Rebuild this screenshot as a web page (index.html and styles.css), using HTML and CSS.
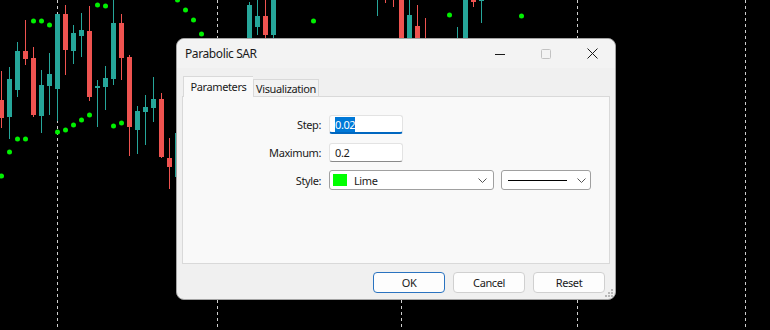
FILE: index.html
```html
<!DOCTYPE html>
<html lang="en">
<head>
  <meta charset="UTF-8" />
  <title>Parabolic SAR</title>
  <link rel="stylesheet" href="styles.css">
</head>
<body>
  <div class="screen">

    <!-- chart canvas -->
    <svg class="chart" width="770" height="330" viewBox="0 0 770 330">
      <g class="grid">
        <line x1="57.5" y1="0" x2="57.5" y2="330" />
        <line x1="217.5" y1="0" x2="217.5" y2="330" />
        <line x1="401.5" y1="0" x2="401.5" y2="330" />
        <line x1="577.5" y1="0" x2="577.5" y2="330" />
        <line x1="745.5" y1="0" x2="745.5" y2="330" />
      </g>

      <g class="bear"><rect x="1" y="71" width="1" height="57"/><rect x="-1" y="100" width="5" height="18"/></g>
      <g class="bull"><rect x="9" y="67" width="1" height="72"/><rect x="7" y="79" width="5" height="38"/></g>
      <g class="bull"><rect x="17" y="42" width="1" height="55"/><rect x="15" y="51" width="5" height="39"/></g>
      <g class="bear"><rect x="25" y="20" width="1" height="45"/><rect x="23" y="51" width="5" height="8"/></g>
      <g class="bear"><rect x="33" y="47" width="1" height="70"/><rect x="31" y="58" width="5" height="57"/></g>
      <g class="bull"><rect x="41" y="70" width="1" height="63"/><rect x="39" y="85" width="5" height="31"/></g>
      <g class="bull"><rect x="49" y="53" width="1" height="62"/><rect x="47" y="74" width="5" height="12"/></g>
      <g class="bull"><rect x="57" y="14" width="1" height="107"/><rect x="55" y="14" width="5" height="75"/></g>
      <g class="bear"><rect x="65" y="5" width="1" height="70"/><rect x="63" y="14" width="5" height="36"/></g>
      <g class="bull"><rect x="73" y="25" width="1" height="39"/><rect x="71" y="33" width="5" height="18"/></g>
      <g class="bull"><rect x="81" y="13" width="1" height="44"/><rect x="79" y="30" width="5" height="6"/></g>
      <g class="bear"><rect x="89" y="6" width="1" height="95"/><rect x="87" y="31" width="5" height="66"/></g>
      <g class="bull"><rect x="97" y="80" width="1" height="47"/><rect x="95" y="86" width="5" height="2"/></g>
      <g class="bull"><rect x="105" y="66" width="1" height="44"/><rect x="103" y="78" width="5" height="9"/></g>
      <g class="bull"><rect x="113" y="0" width="1" height="85"/><rect x="111" y="23" width="5" height="56"/></g>
      <g class="bear"><rect x="121" y="14" width="1" height="66"/><rect x="119" y="23" width="5" height="35"/></g>
      <g class="bear"><rect x="129" y="55" width="1" height="101"/><rect x="127" y="57" width="5" height="70"/></g>
      <g class="bull"><rect x="137" y="106" width="1" height="48"/><rect x="135" y="111" width="5" height="19"/></g>
      <g class="bull"><rect x="145" y="95" width="1" height="50"/><rect x="143" y="107" width="5" height="5"/></g>
      <g class="bull"><rect x="153" y="77" width="1" height="45"/><rect x="151" y="99" width="5" height="9"/></g>
      <g class="bear"><rect x="161" y="93" width="1" height="65"/><rect x="159" y="99" width="5" height="58"/></g>
      <g class="bear"><rect x="169" y="138" width="1" height="51"/><rect x="167" y="158" width="5" height="9"/></g>
      <g class="bull"><rect x="177" y="128" width="1" height="55"/><rect x="175" y="133" width="5" height="44"/></g>
      <g class="bull"><rect x="249" y="2" width="1" height="60"/><rect x="247" y="5" width="5" height="55"/></g>
      <g class="bull"><rect x="257" y="0" width="1" height="35"/><rect x="255" y="16" width="5" height="11"/></g>
      <g class="bear"><rect x="265" y="0" width="1" height="40"/><rect x="263" y="16" width="5" height="19"/></g>
      <g class="bull"><rect x="273" y="0" width="1" height="60"/><rect x="271" y="0" width="5" height="35"/></g>
      <g class="bull"><rect x="377" y="0" width="1" height="16"/></g>
      <g class="bear"><rect x="385" y="0" width="1" height="3"/></g>
      <g class="bear"><rect x="393" y="0" width="1" height="7"/></g>
      <g class="bear"><rect x="399" y="0" width="5" height="60"/></g>
      <g class="bull"><rect x="409" y="0" width="1" height="60"/><rect x="407" y="15" width="5" height="45"/></g>
      <g class="bear"><rect x="417" y="5" width="1" height="55"/><rect x="415" y="26" width="5" height="34"/></g>
      <g class="bear"><rect x="425" y="18" width="1" height="42"/></g>
      <g class="bull"><rect x="457" y="27" width="1" height="33"/></g>
      <g class="bull"><rect x="463" y="0" width="5" height="60"/></g>
      <g class="bear"><rect x="473" y="0" width="1" height="7"/><rect x="471" y="0" width="5" height="2"/></g>
      <g class="bull"><rect x="481" y="0" width="1" height="23"/><rect x="479" y="0" width="5" height="1"/></g>

      <!-- SAR points -->
      <g class="sar">
        <circle cx="1.5" cy="176" r="2.5"/>
        <circle cx="9.5" cy="152" r="2.5"/>
        <circle cx="17.5" cy="139" r="2.5"/>
        <circle cx="25.5" cy="139" r="2.5"/>
        <circle cx="33.5" cy="21" r="2.5"/>
        <circle cx="41.5" cy="21" r="2.5"/>
        <circle cx="49.5" cy="25" r="2.5"/>
        <circle cx="57.5" cy="132" r="2.5"/>
        <circle cx="65.5" cy="130" r="2.5"/>
        <circle cx="73.5" cy="125" r="2.5"/>
        <circle cx="81.5" cy="120" r="2.5"/>
        <circle cx="89.5" cy="115" r="2.5"/>
        <circle cx="97.5" cy="5" r="2.5"/>
        <circle cx="105.5" cy="6" r="2.5"/>
        <circle cx="113.5" cy="126" r="2.5"/>
        <circle cx="121.5" cy="123" r="2.5"/>
        <circle cx="177.5" cy="0" r="2.5"/>
        <circle cx="185.5" cy="10" r="2.5"/>
        <circle cx="193.5" cy="20" r="2.5"/>
        <circle cx="201.5" cy="34" r="2.5"/>
        <circle cx="313.5" cy="21" r="2.5"/>
        <circle cx="449.5" cy="15" r="2.5"/>
        <circle cx="521.5" cy="16" r="2.5"/>
      </g>
    </svg>

    <!-- indicator properties dialog -->
    <div class="dialog">
      <div class="titlebar">
        <span class="title">Parabolic SAR</span>
        <div class="caption-buttons">
          <span class="cap-btn">
            <svg width="10" height="10" viewBox="0 0 10 10"><path d="M0 5.5h10" stroke="#1a1a1a" /></svg>
          </span>
          <span class="cap-btn">
            <svg width="10" height="10" viewBox="0 0 10 10"><rect x="0.5" y="0.5" width="9" height="9" rx="1" fill="none" stroke="#c2c2c2" /></svg>
          </span>
          <span class="cap-btn">
            <svg width="11" height="11" viewBox="0 0 11 11"><path d="M0.5 0.5l10 10M10.5 0.5l-10 10" stroke="#1a1a1a" /></svg>
          </span>
        </div>
      </div>

      <div class="dialog-body">
        <div class="tabs">
          <div class="tab active">Parameters</div>
          <div class="tab">Visualization</div>
        </div>

        <div class="tab-panel">
          <div class="form">
            <label>Step:</label>
            <div class="textbox focused"><span class="selected">0.02</span></div>

            <label>Maximum:</label>
            <div class="textbox">0.2</div>

            <label>Style:</label>
            <div class="combos">
              <div class="combo color-combo">
                <span class="swatch"></span>
                <span class="combo-text">Lime</span>
                <svg class="chevron" width="9" height="5" viewBox="0 0 9 5"><path d="M0.5 0.5l4 4 4-4" fill="none" stroke="#555" /></svg>
              </div>
              <div class="combo line-combo">
                <span class="line-sample"></span>
                <svg class="chevron" width="9" height="5" viewBox="0 0 9 5"><path d="M0.5 0.5l4 4 4-4" fill="none" stroke="#555" /></svg>
              </div>
            </div>
          </div>
        </div>

        <div class="buttons">
          <button class="btn default">OK</button>
          <button class="btn">Cancel</button>
          <button class="btn">Reset</button>
        </div>
      </div>

      <svg class="grip" width="8" height="8" viewBox="0 0 8 8">
        <rect x="6" y="0" width="2" height="2"/>
        <rect x="3" y="3" width="2" height="2"/><rect x="6" y="3" width="2" height="2"/>
        <rect x="0" y="6" width="2" height="2"/><rect x="3" y="6" width="2" height="2"/><rect x="6" y="6" width="2" height="2"/>
      </svg>
    </div>

  </div>
</body>
</html>
```

FILE: styles.css
```css
* { box-sizing: border-box; }

body {
  margin: 0;
  background: #000;
  overflow: hidden;
}

.screen {
  position: relative;
  width: 770px;
  height: 330px;
  background: #000;
}

/* CHART */
.chart {
  display: block;
}

.grid line {
  stroke: #cfcfcf;
  stroke-width: 1;
  stroke-dasharray: 3 3;
}

.bull { fill: #26a69a; }
.bear { fill: #ef5350; }
.sar  { fill: #00f000; }

/* DIALOG */
.dialog {
  position: absolute;
  left: 176px;
  top: 38px;
  width: 440px;
  height: 262px;
  display: flex;
  flex-direction: column;
  background: #f0f0f0;
  border: 1px solid #a3a3a3;
  border-radius: 8px;
  font-family: "Noto Sans", sans-serif;
  font-size: 11px;
  letter-spacing: -0.4px;
  color: #1a1a1a;
}

.titlebar {
  height: 29px;
  display: flex;
  align-items: center;
  justify-content: space-between;
  padding-left: 8px;
  background: #f3f3f3;
  border-radius: 8px 8px 0 0;
}

.title {
  font-size: 12px;
}

.caption-buttons {
  display: flex;
  height: 100%;
}

.cap-btn {
  width: 46px;
  display: flex;
  align-items: center;
  justify-content: center;
}

.dialog-body {
  flex: 1;
  display: flex;
  flex-direction: column;
  padding: 8px 5px 6px 5px;
}

/* TABS */
.tabs {
  display: flex;
  align-items: flex-end;
  height: 20px;
  padding-left: 1px;
}

.tab {
  height: 17px;
  width: 66px;
  display: flex;
  align-items: center;
  justify-content: center;
  background: #f2f2f2;
  border: 1px solid #d9d9d9;
  border-bottom: none;
}

.tab.active {
  position: relative;
  z-index: 1;
  width: 70px;
  height: 21px;
  margin-bottom: -1px;
  padding-bottom: 2px;
  background: #f9f9f9;
  border-right: none;
}

.tab-panel {
  height: 168px;
  background: #f9f9f9;
  border: 1px solid #d9d9d9;
}

/* FORM */
.form {
  display: grid;
  grid-template-columns: 138px auto;
  grid-auto-rows: 28px;
  column-gap: 8px;
  align-items: center;
  padding-top: 13px;
}

.form label {
  text-align: right;
}

.textbox {
  width: 74px;
  height: 19px;
  display: flex;
  align-items: center;
  padding-left: 5px;
  background: #fff;
  border: 1px solid #e3e3e3;
  border-bottom-color: #8a8a8a;
  border-radius: 3px;
}

.textbox.focused {
  border-bottom: 2px solid #0067c0;
  padding-top: 1px;
}

.selected {
  background: #0078d7;
  color: #fff;
}

.combos {
  display: flex;
  gap: 7px;
}

.combo {
  height: 20px;
  display: flex;
  align-items: center;
  background: #fff;
  border: 1px solid #a0a0a0;
  border-radius: 3px;
}

.color-combo {
  width: 165px;
  padding: 0 6px 0 3px;
}

.swatch {
  width: 14px;
  height: 12px;
  background: #00ff00;
}

.combo-text {
  flex: 1;
  margin-left: 7px;
}

.line-combo {
  width: 90px;
  padding: 0 4px 0 6px;
}

.line-sample {
  width: 59px;
  height: 1px;
  background: #000;
  margin-right: auto;
}

.chevron {
  display: block;
}

/* BUTTONS */
.buttons {
  display: flex;
  justify-content: flex-end;
  gap: 8px;
  margin-top: 8px;
  padding-right: 5px;
}

.btn {
  width: 72px;
  height: 21px;
  padding: 0;
  font-family: inherit;
  font-size: 11px;
  letter-spacing: inherit;
  color: #1a1a1a;
  background: #fdfdfd;
  border: 1px solid #d0d0d0;
  border-radius: 4px;
}

.btn.default {
  border-color: #2a73c0;
}

.grip {
  position: absolute;
  right: 2px;
  bottom: 2px;
  fill: #b8b8b8;
}
```
